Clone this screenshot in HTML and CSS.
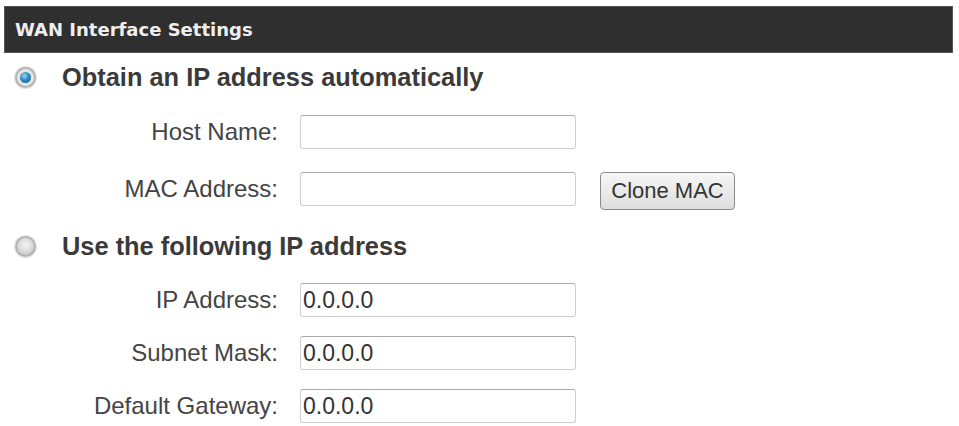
FILE: index.html
```html
<!DOCTYPE html>
<html lang="en">
<head>
  <meta charset="UTF-8" />
  <title>WAN Interface Settings</title>
  <link rel="stylesheet" href="styles.css">
</head>
<body>
  <div class="panel">
    <div class="header">WAN Interface Settings</div>

    <label class="option">
      <input type="radio" name="wantype" checked />
      <span class="radio"></span>
      <span class="option-text">Obtain an IP address automatically</span>
    </label>

    <div class="fields auto">
      <div class="field">
        <label for="host">Host Name:</label>
        <input type="text" id="host" />
      </div>
      <div class="field">
        <label for="mac">MAC Address:</label>
        <input type="text" id="mac" />
        <button class="clone-btn">Clone MAC</button>
      </div>
    </div>

    <label class="option second">
      <input type="radio" name="wantype" />
      <span class="radio"></span>
      <span class="option-text">Use the following IP address</span>
    </label>

    <div class="fields static">
      <div class="field">
        <label for="ip">IP Address:</label>
        <input type="text" id="ip" value="0.0.0.0" />
      </div>
      <div class="field">
        <label for="mask">Subnet Mask:</label>
        <input type="text" id="mask" value="0.0.0.0" />
      </div>
      <div class="field">
        <label for="gw">Default Gateway:</label>
        <input type="text" id="gw" value="0.0.0.0" />
      </div>
    </div>
  </div>
</body>
</html>
```

FILE: styles.css
```css
body {
  margin: 0;
  padding: 0;
  background: #fff;
  font-family: "Liberation Sans", Arial, sans-serif;
  color: #444;
}
.panel {
  padding-top: 6px;
}
.header {
  margin: 0 6px 0 4px;
  height: 47px;
  box-sizing: border-box;
  padding-left: 10px;
  display: flex;
  align-items: center;
  background: #2f2f2f;
  border: 1px solid #555;
  color: #eee;
  font-family: "DejaVu Sans", Verdana, sans-serif;
  font-weight: bold;
  font-size: 18px;
}
.option {
  display: flex;
  align-items: center;
  height: 48px;
  padding-left: 15px;
  cursor: pointer;
}
.option.second {
  margin-top: 16px;
}
.option input {
  display: none;
}
.radio {
  width: 21px;
  height: 21px;
  box-sizing: border-box;
  border-radius: 50%;
  border: 2px solid #b4b4b4;
  background: radial-gradient(circle at 50% 40%, #f4f4f4 0%, #d8d8d8 55%, #bdbdbd 100%);
  box-shadow: 0 0 0 1px #e4e4e4;
  display: flex;
  align-items: center;
  justify-content: center;
}
.option input:checked + .radio {
  background: #e6e6e6;
}
.option input:checked + .radio::after {
  content: "";
  width: 11px;
  height: 11px;
  border-radius: 50%;
  background: radial-gradient(circle at 40% 35%, #9bd6f2 0%, #2a8cc4 45%, #12557f 100%);
}
.option-text {
  margin-left: 26px;
  font-size: 25.4px;
  font-weight: bold;
  color: #3a3a3a;
}
.fields {
  display: flex;
  flex-direction: column;
}
.fields.auto {
  margin-top: 14px;
  gap: 23px;
}
.fields.static {
  margin-top: 13px;
  gap: 19px;
}
.field {
  display: flex;
  align-items: center;
  height: 34px;
}
.field label {
  width: 278px;
  text-align: right;
  font-size: 24px;
  color: #444;
}
.field input {
  margin-left: 22px;
  width: 276px;
  height: 34px;
  box-sizing: border-box;
  padding: 0 2px;
  border: 1px solid #cfcfcf;
  border-top-color: #a9a9a9;
  border-radius: 3px;
  font-family: "Liberation Sans", Arial, sans-serif;
  font-size: 23px;
  color: #333;
  background: #fff;
}
.clone-btn {
  margin-left: 24px;
  height: 38px;
  margin-top: 4px;
  width: 135px;
  padding: 0;
  border: 1px solid #8a8a8a;
  border-radius: 4px;
  background: linear-gradient(#f6f6f6, #dedede);
  font-family: "Liberation Sans", Arial, sans-serif;
  font-size: 22px;
  color: #333;
  cursor: pointer;
}
```
